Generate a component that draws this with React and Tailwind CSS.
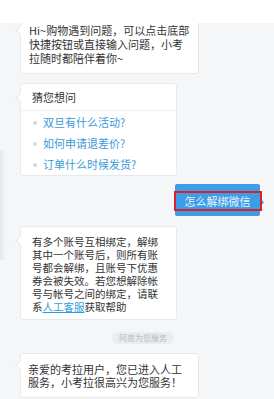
export default function App() {
  const faq = ["双旦有什么活动?", "如何申请退差价?", "订单什么时候发货?"];

  return (
    <div
      className="relative w-[274px] h-[399px] overflow-hidden bg-[#f5f6f7] text-[#333] flex flex-col"
      style={{ fontFamily: '"Noto Sans CJK SC", "Noto Sans", sans-serif' }}
    >
      {/* faint edge shading on the left */}
      <div className="absolute left-0 top-[150px] w-[6px] h-[110px] bg-gradient-to-r from-[#e4e6e8] to-transparent" />

      <div className="h-[23px] shrink-0 bg-white" />

      <div className="flex flex-col items-start pl-[20px] pr-[14px]">
        {/* welcome */}
        <div className="relative w-[179px] bg-white border border-t-0 border-[#e8e9ea] rounded-b-[3px] pl-[8px] pb-[8px] text-[11px] leading-[14px]">
          <Tail top={4} />
          Hi~购物遇到问题，可以点击底部<br />
          快捷按钮或直接输入问题，小考<br />
          拉随时都陪伴着你~
        </div>

        {/* guess */}
        <div className="relative mt-[9px] w-[157px] bg-white border border-[#e8e9ea] rounded-[3px]">
          <Tail top={10} />
          <div className="h-[26px] flex items-center pl-[11px] text-[11px]">猜您想问</div>
          <div className="h-px bg-[#f0f1f2]" />
          <ul className="pt-px">
            {faq.map((q) => (
              <li key={q} className="h-[21px] flex items-center gap-[6px] pl-[12px] text-[11px] text-[#3a9ad9]">
                <span className="w-[4px] h-[4px] rounded-full bg-[#d6d8da]" />
                {q}
              </li>
            ))}
          </ul>
        </div>

        {/* user message */}
        <div className="self-end mt-[8px] relative w-[85px] h-[32px] bg-[#3d9de6] rounded-[2px] flex items-center justify-center pt-[3px] text-[11px] text-[#e8f3fc]">
          怎么解绑微信
          <span className="absolute right-[-3px] top-[16px] w-[5px] h-[5px] bg-[#3d9de6] rotate-45" />
          <span className="absolute left-[-1px] right-[-2px] top-[7px] h-[20px] border-2 border-[#d8212b]" />
        </div>

        {/* answer */}
        <div className="relative mt-[10px] w-[157px] bg-white border border-[#e8e9ea] rounded-[3px] pl-[11px] pt-[8px] pb-[6px] text-[10.5px] leading-[13px]">
          <Tail top={10} />
          有多个账号互相绑定，解绑<br />
          其中一个账号后，则所有账<br />
          号都会解绑，且账号下优惠<br />
          券会被失效。若您想解除帐<br />
          号与帐号之间的绑定，请联<br />
          系<span className="text-[#2f9fd8] underline">人工客服</span>获取帮助
        </div>

        <span className="self-center mt-[12px] ml-[6px] h-[12px] px-[7px] rounded-full bg-[#eaedef] text-[8px] leading-[12px] text-[#b3bbc2]">
          阿南为您服务
        </span>

        {/* service */}
        <div className="relative mt-[9px] w-[179px] bg-white border border-[#e8e9ea] rounded-[3px] pl-[7px] pt-[9px] pb-[8px] text-[11px] leading-[13px]">
          <Tail top={8} />
          亲爱的考拉用户，您已进入人工<br />
          服务，小考拉很高兴为您服务！
        </div>
      </div>
    </div>
  );
}

function Tail({ top }) {
  return (
    <span
      className="absolute left-[-4px] w-[7px] h-[7px] bg-white border-l border-b border-[#e8e9ea] rotate-45"
      style={{ top }}
    />
  );
}
